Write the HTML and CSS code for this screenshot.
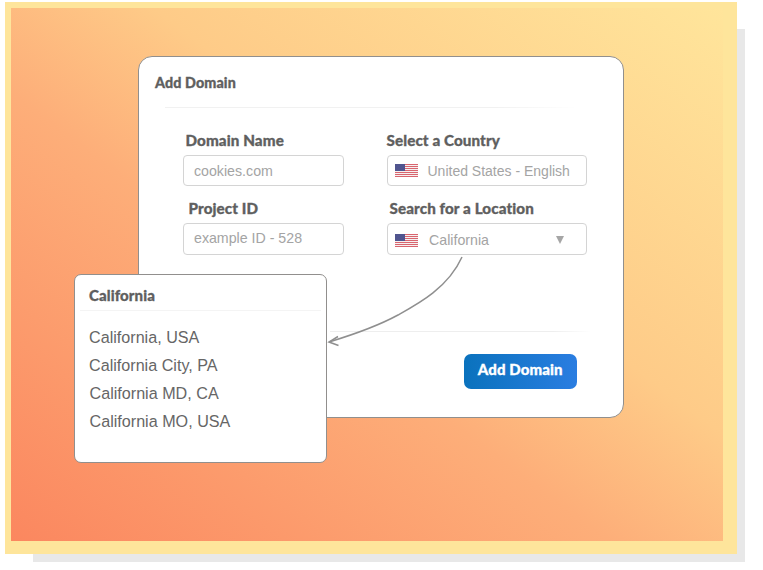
FILE: index.html
```html
<!DOCTYPE html>
<html lang="en">
<head>
<meta charset="utf-8">
<title>Add Domain</title>
<link rel="stylesheet" href="styles.css">
</head>
<body>
<div class="stage">
  <div class="shadow"></div>
  <div class="frame">
    <div class="panel">
      <section class="card">
        <h2 class="card-title">Add Domain</h2>
        <div class="rule rule-top"></div>
        <div class="form">
          <div class="field">
            <label class="label label-domain">Domain Name</label>
            <div class="input input-text">cookies.com</div>
          </div>
          <div class="field">
            <label class="label label-country">Select a Country</label>
            <div class="input input-flag">
              <svg class="flag" viewBox="0 0 23 13"><use href="#us"/></svg>
              <span class="country-text">United States - English</span>
            </div>
          </div>
          <div class="field">
            <label class="label label-project">Project ID</label>
            <div class="input input-tall input-text"><span class="raised">example ID - 528</span></div>
          </div>
          <div class="field">
            <label class="label label-location">Search for a Location</label>
            <div class="input input-tall input-flag">
              <svg class="flag flag-low" viewBox="0 0 23 13"><use href="#us"/></svg>
              <span class="location-text">California</span>
              <span class="caret"></span>
            </div>
          </div>
        </div>
        <div class="rule rule-bottom"></div>
        <div class="actions"><button class="button">Add Domain</button></div>
      </section>
    </div>
  </div>

  <aside class="popup">
    <h3 class="popup-title">California</h3>
    <div class="popup-rule"></div>
    <ul class="popup-list">
      <li>California, USA</li>
      <li>California City, PA</li>
      <li class="nudge">California MD, CA</li>
      <li class="nudge">California MO, USA</li>
    </ul>
  </aside>

  <svg class="arrow" viewBox="0 0 763 570" width="763" height="570">
    <path d="M462 257C448 288 418 304 398 315C376 327 352 335 329 342" />
    <path d="M338 336.500L329 342L338.500 345.500" />
  </svg>

  <svg class="defs" width="0" height="0">
    <symbol id="us" viewBox="0 0 23 13">
      <rect width="23" height="13" fill="#f6f0f0"/>
      <rect y="0" width="23" height="1" fill="#d9656f"/>
      <rect y="2" width="23" height="1" fill="#d9656f"/>
      <rect y="4" width="23" height="1" fill="#d9656f"/>
      <rect y="6" width="23" height="1" fill="#d9656f"/>
      <rect y="8" width="23" height="1" fill="#d9656f"/>
      <rect y="10" width="23" height="1" fill="#d9656f"/>
      <rect y="12" width="23" height="1" fill="#d9656f"/>
      <rect width="10" height="7" fill="#50558f"/>
    </symbol>
  </svg>
</div>
</body>
</html>
```
FILE: styles.css
```css
* { box-sizing: border-box; }
html, body { margin: 0; padding: 0; background: #fff; }
.stage {
  position: relative;
  width: 763px;
  height: 570px;
  overflow: hidden;
  font-family: "Liberation Sans", Arial, sans-serif;
  padding: 2px 0 0 5px;
}
.shadow {
  position: absolute;
  left: 33px;
  top: 29px;
  width: 712px;
  height: 533px;
  background: #e8e8e8;
}
.frame {
  position: relative;
  width: 732px;
  height: 552px;
  padding: 6px 14px 13px 6px;
  background: #fee59b;
}
.panel {
  height: 533px;
  padding: 48px 0 0 127px;
  background: linear-gradient(to top right, #fb875f 0%, #fdae79 42%, #fecb88 60%, #ffe59b 100%);
}
.card {
  width: 486px;
  height: 362px;
  padding: 17px 0 0 16px;
  background: #fff;
  border: 1px solid #918f8d;
  border-radius: 14px;
}
.card-title, .label, .popup-title, .button {
  font-family: Lato, sans-serif;
  font-weight: 900;
  color: #5f5f5f;
  letter-spacing: 0.1px;
  -webkit-text-stroke: 0.3px currentColor;
}
.card-title { margin: 0; font-size: 14.300px; line-height: 18px; }
.rule { height: 1px; }
.rule-top {
  width: 412px;
  margin: 15px 0 0 10px;
  background: linear-gradient(to right, #f1f1f1 80%, #fff);
}
.rule-bottom {
  width: 262px;
  margin: 0 0 0 175px;
  background: linear-gradient(to right, #eeeeee 85%, #fff);
}
.form {
  display: grid;
  grid-template-columns: 161px 200px;
  column-gap: 43px;
  row-gap: 13px;
  margin: 23px 0 76px 27.500px;
}
.field { display: flex; flex-direction: column; gap: 5px; }
.label { display: block; font-size: 15.200px; line-height: 19px; }
.label-domain { padding-left: 3px; }
.label-project { padding-left: 6px; }
.label-location { padding-left: 3px; }
.input {
  display: flex;
  align-items: center;
  height: 31px;
  background: #fff;
  border: 1px solid #d4d4d4;
  border-radius: 4px;
  font-size: 14.200px;
  color: #a4a4a4;
}
.input-tall { height: 32px; }
.input-text { padding-left: 10.500px; }
.input-flag { padding-left: 7px; }
.flag { width: 23px; height: 13px; flex: none; }
.flag-low { align-self: flex-start; margin-top: 10px; }
.raised { margin-bottom: 2px; }
.country-text { margin-left: 10px; font-size: 14px; }
.location-text { margin: 2px 0 0 11.500px; }
.caret {
  width: 0;
  height: 0;
  margin: 2px 22px 0 auto;
  border-left: 4px solid transparent;
  border-right: 4px solid transparent;
  border-top: 8px solid #a6a6a6;
}
.actions { display: flex; justify-content: flex-end; padding: 22px 46px 0 0; }
.button {
  width: 113.500px;
  height: 35px;
  padding: 0 0 4px;
  border: 0;
  border-radius: 7px;
  background: linear-gradient(to right, #0a72bd, #2a7de1);
  color: #fff;
  font-size: 15px;
  line-height: 31px;
}
.popup {
  position: absolute;
  left: 74px;
  top: 274px;
  width: 253px;
  height: 189px;
  padding: 11px 5px 0 5px;
  background: #fff;
  border: 1px solid #918f8d;
  border-radius: 7px;
}
.popup-title { margin: 0 0 0 9px; font-size: 15px; line-height: 18px; }
.popup-rule { height: 1px; margin-top: 6px; background: #f4f4f4; }
.popup-list {
  list-style: none;
  margin: 12px 0 0 9px;
  padding: 0;
  font-size: 16.150px;
  line-height: 28px;
  color: #666;
}
.popup-list .nudge { padding-left: 0.500px; }
.arrow { position: absolute; left: 0; top: 0; pointer-events: none; }
.arrow path { fill: none; stroke: #8f8f8f; stroke-width: 1.500px; }
.defs { position: absolute; }
```
